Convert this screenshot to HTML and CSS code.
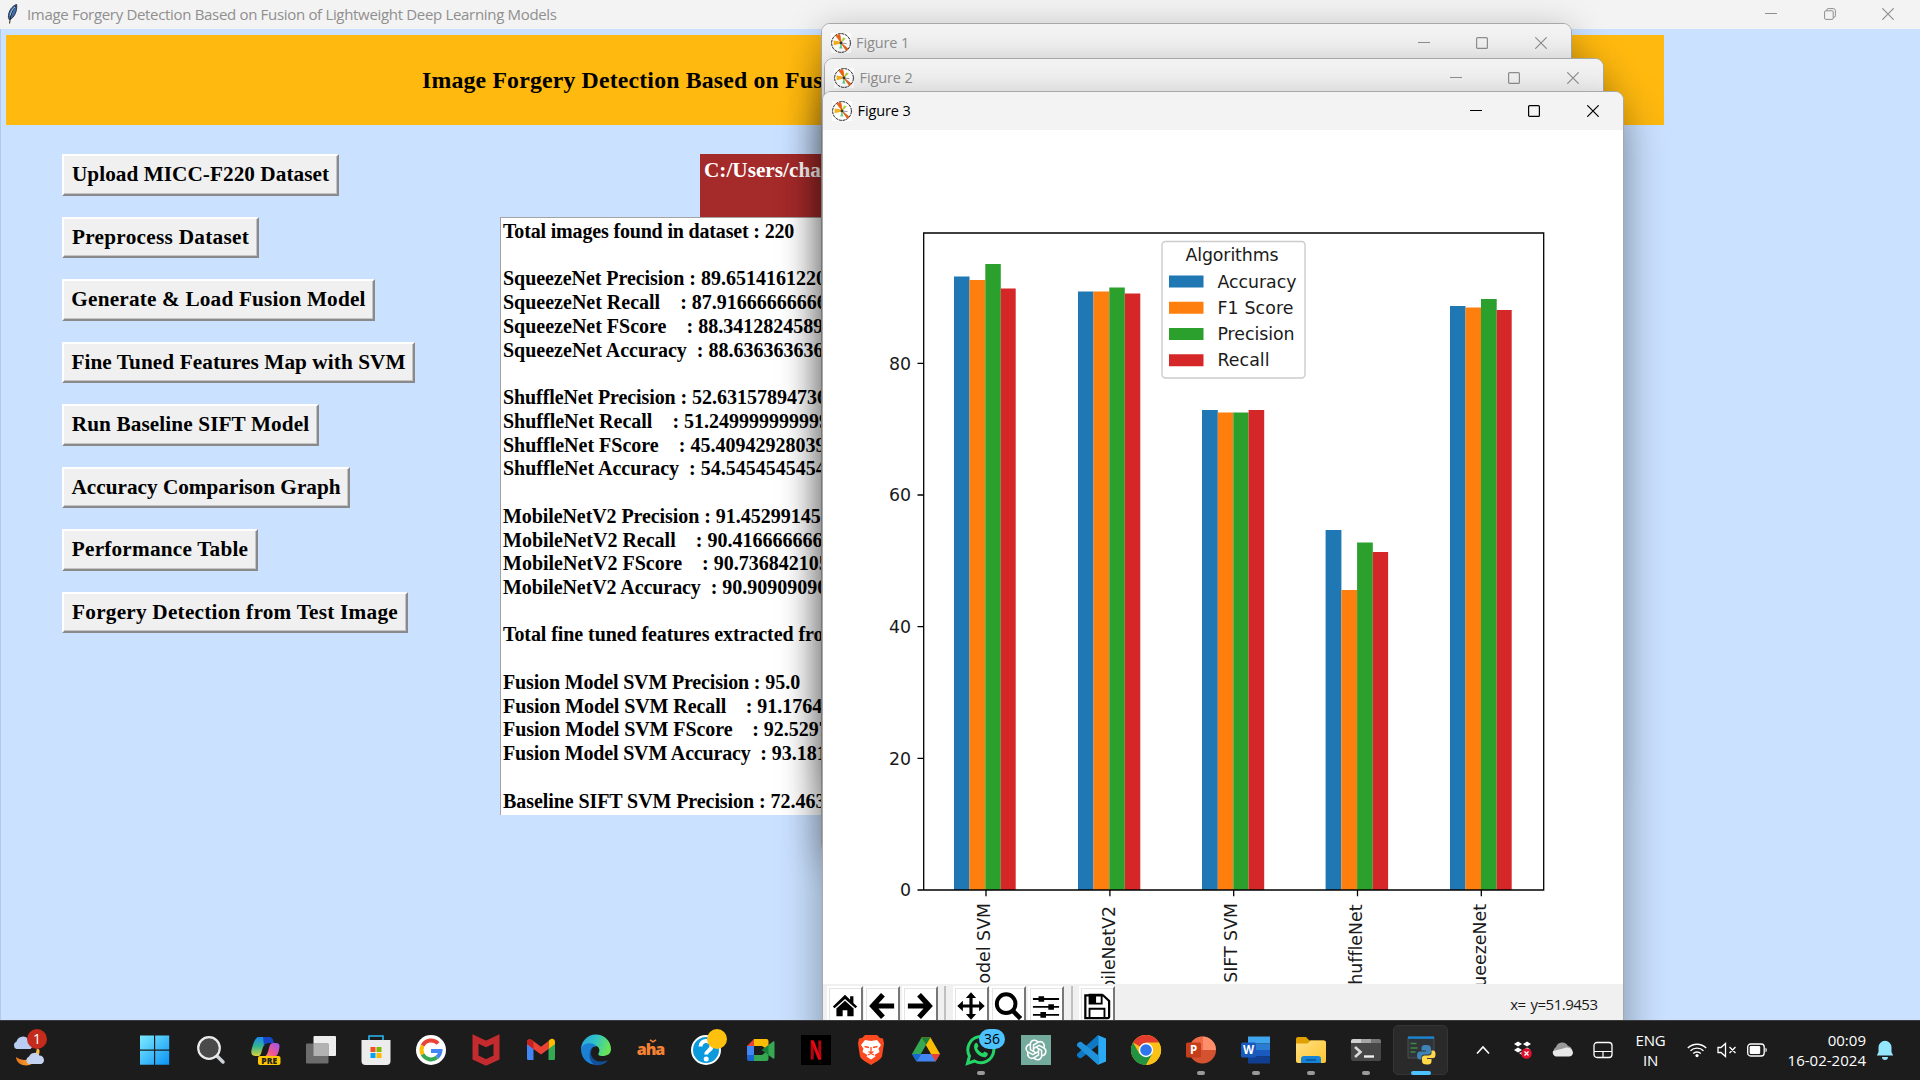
FILE: index.html
```html
<!DOCTYPE html>
<html lang="en">
<head>
<meta charset="utf-8">
<title>Image Forgery Detection</title>
<link rel="stylesheet" href="styles.css">
</head>
<body>
<svg class="defs" width="0" height="0">
  <defs>
    <linearGradient id="gWin" x1="0" y1="0" x2="1" y2="1"><stop offset="0" stop-color="#7deaff"/><stop offset="1" stop-color="#0a93f5"/></linearGradient>
    <linearGradient id="gCop1" x1="0" y1="0" x2="0" y2="1"><stop offset="0" stop-color="#1b8af0"/><stop offset=".5" stop-color="#35b58d"/><stop offset="1" stop-color="#d9d53a"/></linearGradient>
    <linearGradient id="gCop2" x1="1" y1="0" x2="0" y2="1"><stop offset="0" stop-color="#9a55f5"/><stop offset=".6" stop-color="#f0568f"/><stop offset="1" stop-color="#f79a5a"/></linearGradient>
    <linearGradient id="gEdge" x1="0" y1="0" x2="1" y2=".3"><stop offset="0" stop-color="#2b9fe0"/><stop offset=".5" stop-color="#2fc3c9"/><stop offset="1" stop-color="#67e35a"/></linearGradient>
    <linearGradient id="gFold" x1="0" y1="0" x2="1" y2="1"><stop offset="0" stop-color="#ffe083"/><stop offset="1" stop-color="#ffc52e"/></linearGradient>
    <linearGradient id="gMoon" x1="0" y1="0" x2="1" y2="0"><stop offset="0" stop-color="#e8731a"/><stop offset="1" stop-color="#ffc24a"/></linearGradient>
    <symbol id="mpl" viewBox="0 0 20 20">
      <rect width="20" height="20" fill="#fff"/>
      <circle cx="10" cy="10" r="9.4" fill="#fff" stroke="#222" stroke-width="1" stroke-dasharray="3 .7"/>
      <path d="M10.400 10 4.800 2.800 8.800 1.600z" fill="#ef6110" stroke="#ef6110" stroke-width=".8"/><path d="M10 10.400 2.600 12.200 2.600 7.600 9 8.600z" fill="#f2b21c"/>
      <path d="M10 10 12 4.400 14.800 5.600z" fill="#a6cf3a"/><path d="M10 10 8.200 15.600 11.400 15.600z" fill="#5cd37c"/>
      <path d="M10 10 15.400 17.400 17.200 16z" fill="#e2641d" stroke="#e2641d"/><path d="M10 10 15.500 10.600" stroke="#999"/><circle cx="10" cy="10" r="1.400" fill="#333"/>
    </symbol>
    <symbol id="min" viewBox="0 0 12 12"><path d="M0 5.500h12" stroke="currentColor"/></symbol>
    <symbol id="max" viewBox="0 0 12 12"><rect x=".6" y=".6" width="10.800" height="10.800" rx="1" fill="none" stroke="currentColor" stroke-width="1.200"/></symbol>
    <symbol id="close" viewBox="0 0 12 12"><path d="M.3.3l11.400 11.400M11.700.3.3 11.700" stroke="currentColor" stroke-width="1.200"/></symbol>
    <symbol id="restore" viewBox="0 0 12 12"><path d="M2.800 2.600V2a1.400 1.400 0 0 1 1.400-1.400h5a2.200 2.200 0 0 1 2.200 2.200v5a1.400 1.400 0 0 1-1.400 1.400h-.6" fill="none" stroke="currentColor"/><rect x=".6" y="2.800" width="8.600" height="8.600" rx="1.200" fill="none" stroke="currentColor"/></symbol>
  </defs>
</svg>

<div class="desktop">
  <main class="app">
    <header class="titlebar">
      <svg class="feather" viewBox="0 0 12 20"><path d="M10.600.4C6 2 2.200 7 2.400 13.600l1 2.200C8 14 11.600 7 10.600.4z" fill="#3f6fae" stroke="#1d2733" stroke-width=".9"/><path d="M9.800 2C6.500 6 4.500 10 3.600 19.500" fill="none" stroke="#222" stroke-width="1"/><path d="M9 3C6.600 5 5 8 4 11.500" stroke="#a8c8ea" fill="none" stroke-width="1"/></svg>
      <span class="title">Image Forgery Detection Based on Fusion of Lightweight Deep Learning Models</span>
      <div class="controls">
        <svg><use href="#min"/></svg><svg><use href="#restore"/></svg><svg><use href="#close"/></svg>
      </div>
    </header>
    <div class="client">
      <h1 class="banner">Image Forgery Detection Based on Fusion</h1>
      <div class="content">
        <nav class="actions">
          <button class="upload">Upload MICC-F220 Dataset</button>
          <button class="preprocess">Preprocess Dataset</button>
          <button class="generate">Generate &amp; Load Fusion Model</button>
          <button class="features">Fine Tuned Features Map with SVM</button>
          <button class="baseline">Run Baseline SIFT Model</button>
          <button class="graph">Accuracy Comparison Graph</button>
          <button class="table">Performance Table</button>
          <button class="detect">Forgery Detection from Test Image</button>
        </nav>
        <section class="results">
          <div class="path">C:/Users/cha</div>
          <pre class="log"><span class="total">Total images found in dataset : 220</span>

<span class="squeeze">SqueezeNet Precision : </span>89.6514161220
<span class="recall">SqueezeNet Recall    : </span>87.91666666666
<span class="recall">SqueezeNet FScore    : </span>88.3412824589
<span class="recall">SqueezeNet Accuracy  : </span>88.6363636363

<span class="shuffle">ShuffleNet Precision : </span>52.63157894736
<span class="recall">ShuffleNet Recall    : </span>51.249999999999
<span class="recall">ShuffleNet FScore    : </span>45.40942928039
<span class="recall">ShuffleNet Accuracy  : </span>54.5454545454

<span class="mobile">MobileNetV2 Precision : </span>91.4529914529
<span class="recall">MobileNetV2 Recall    : </span>90.4166666666
<span class="recall">MobileNetV2 FScore    : </span>90.7368421052
<span class="mobile">MobileNetV2 Accuracy  : </span>90.9090909090

<span class="mobile">Total fine tuned features extracted from</span>

<span class="fusion">Fusion Model SVM Precision : </span>95.0
<span class="mobile">Fusion Model SVM Recall    : </span>91.1764
<span class="mobile">Fusion Model SVM FScore    : </span>92.5297
<span class="fusion">Fusion Model SVM Accuracy  : </span>93.1818

<span class="mobile">Baseline SIFT SVM Precision : </span>72.4637</pre>
        </section>
      </div>
    </div>
  </main>

  <section class="window fig1">
    <header class="titlebar"><svg class="mpl"><use href="#mpl"/></svg><span class="title">Figure 1</span>
      <div class="controls"><svg><use href="#min"/></svg><svg><use href="#max"/></svg><svg><use href="#close"/></svg></div></header>
  </section>
  <section class="window fig2">
    <header class="titlebar"><svg class="mpl"><use href="#mpl"/></svg><span class="title">Figure 2</span>
      <div class="controls"><svg><use href="#min"/></svg><svg><use href="#max"/></svg><svg><use href="#close"/></svg></div></header>
  </section>
  <section class="window fig3">
    <header class="titlebar"><svg class="mpl"><use href="#mpl"/></svg><span class="title">Figure 3</span>
      <div class="controls"><svg><use href="#min"/></svg><svg><use href="#max"/></svg><svg><use href="#close"/></svg></div></header>
    <svg class="chart" viewBox="823 130 800 854" width="800" height="854">
      <g fill="#1f77b4"><path d="M954 276.500h15.500v613.500H954zM1078 291.500h15.500V890H1078zM1202 410h15.800V890H1202zM1325.600 530h15.800V890h-15.800zM1450 306h15.500v584H1450z"/></g>
      <g fill="#ff7f0e"><path d="M969.500 280h15.800V890h-15.800zM1093.500 291.500h15.800V890h-15.800zM1217.800 412.500h15.500V890h-15.500zM1341.400 590h15.700V890h-15.700zM1465.500 307.500h15.500V890h-15.500z"/></g>
      <g fill="#2ca02c"><path d="M985.300 264h15.500v626h-15.500zM1109.300 287.500h15.500V890h-15.500zM1233.300 412.500h15.300V890h-15.300zM1357.100 542.500h15.700V890h-15.700zM1481 299h15.700v591H1481z"/></g>
      <g fill="#d62728"><path d="M1000.800 288.500h14.900V890h-14.900zM1124.800 293.500h15.500V890h-15.500zM1248.600 410h15.600V890h-15.600zM1372.800 552h15.300v338h-15.300zM1496.700 310h15V890h-15z"/></g>
      <path d="M923.700 233h620v657h-620zM923.700 890h-6.200m6.200-131.700h-6.200m6.200-131.600h-6.200m6.200-131.700h-6.200m6.200-131.600h-6.200M986 890v6.200m123.900-6.200v6.200m123.800-6.200v6.200m123.800-6.200v6.200m123.800-6.200v6.200" fill="none" stroke="#000" stroke-width="1.300"/>
      <g class="ticks" text-anchor="end"><text x="911" y="896.200">0</text><text x="911" y="764.700">20</text><text x="911" y="632.800">40</text><text x="911" y="501.400">60</text><text x="911" y="369.700">80</text></g>
      <g class="ticks" text-anchor="end">
        <text transform="translate(989.500 903) rotate(-90)">Fusion Model SVM</text>
        <text transform="translate(1114.500 906) rotate(-90)">MobileNetV2</text>
        <text transform="translate(1237 903) rotate(-90)">Baseline SIFT SVM</text>
        <text transform="translate(1361.700 904.500) rotate(-90)">ShuffleNet</text>
        <text transform="translate(1485.700 904) rotate(-90)">SqueezeNet</text>
      </g>
      <rect x="1162" y="241.500" width="143" height="136.500" rx="3.500" fill="#fff" stroke="#ccc" stroke-width="1.400"/>
      <g class="ticks"><text x="1185.500" y="261.300" textLength="93">Algorithms</text><text x="1217.500" y="287.500" textLength="79">Accuracy</text><text x="1217.500" y="313.800" textLength="76">F1 Score</text><text x="1217.500" y="340" textLength="77">Precision</text><text x="1217.500" y="366.200" textLength="52">Recall</text></g>
      <path d="M1169 275.500h34.500v12H1169z" fill="#1f77b4"/><path d="M1169 301.800h34.500v12H1169z" fill="#ff7f0e"/><path d="M1169 328h34.500v12H1169z" fill="#2ca02c"/><path d="M1169 354.300h34.500v12H1169z" fill="#d62728"/>
    </svg>
    <footer class="toolbar">
      <div class="tools">
        <button><svg viewBox="0 0 30 30"><path d="M15 3 2 15.500l1.800 2L15 7.400l11.200 10.100 1.800-2-4-3.800V4.500h-3.500v3.800zM15 9.500 5.800 17.700V26h6.700v-6.500h5V26h6.700v-8.300z"/></svg></button>
        <button><svg viewBox="0 0 30 30"><path d="M16 3 5 15l11 12M6 15h22" fill="none" stroke="#000" stroke-width="5.600"/></svg></button>
        <button><svg viewBox="0 0 30 30"><path d="M14 3l11 12-11 12M24 15H2" fill="none" stroke="#000" stroke-width="5.600"/></svg></button>
        <i></i>
        <button><svg viewBox="0 0 30 30"><path d="M15 .3l5.500 6h-3.800v7h7V9.500l6 5.500-6 5.500v-3.800h-7v7h3.800l-5.500 6-5.500-6h3.800v-7h-7v3.800L.3 15l6-5.500v3.800h7v-7H9.500z"/></svg></button>
        <button><svg viewBox="0 0 30 30"><circle cx="13" cy="12.500" r="10" fill="none" stroke="#000" stroke-width="4.200"/><path d="M20 20l8.500 8.500" stroke="#000" stroke-width="5"/></svg></button>
        <button><svg viewBox="0 0 30 30"><path d="M1 7.500h28M1 16h28M1 24.500h28" stroke="#000" stroke-width="2"/><path d="M7 4.500h6v6H7zM17.500 13h6v6h-6zM9 21.500h6v6H9z"/></svg></button>
        <i></i>
        <button><svg viewBox="0 0 30 30"><path d="M2.500 3.500h19l6.500 6v17a1.500 1.500 0 0 1-1.500 1.500h-24z" fill="none" stroke="#000" stroke-width="2.400"/><path d="M7 3h13v9.500H7zM7 27v-9h16v9" fill="none" stroke="#000" stroke-width="2"/><path d="M7 3h7v9H7z"/></svg></button>
      </div>
      <output>x= y=51.9453</output>
    </footer>
  </section>

  <footer class="taskbar">
    <div class="weather">
      <svg viewBox="0 0 36 36" width="36" height="36"><path d="M25 17a13 13 0 0 1-21 9c0 5 5 8.500 10.500 8.500C22 34 28 27 27.500 19z" fill="url(#gMoon)"/><path d="M4.500 18a4 4 0 0 1 0-7.500 6.500 6.500 0 0 1 12-1.500 5 5 0 0 1 2 9z" fill="#b9cdf2"/><path d="M17 33a4 4 0 0 1 0-7.500 6 6 0 0 1 10.500-1 4.500 4.500 0 0 1 2 8.500z" fill="#c3d2f0"/></svg>
      <b class="badge red">1</b>
    </div>
    <div class="apps">
      <div><svg viewBox="0 0 30 30"><path d="M-1 .5h14v14H-1zm15.200 0h14v14h-14zM-1 15.700h14v14H-1zm15.200 0h14v14h-14z" fill="url(#gWin)"/></svg></div>
      <div><svg viewBox="0 0 30 30"><path d="M20 20l7 7" stroke="#cfd3d6" stroke-width="3.500" stroke-linecap="round"/><circle cx="13" cy="13" r="10.800" fill="#4a4a4a" stroke="#e8eaec" stroke-width="2.200"/></svg></div>
      <div><svg viewBox="0 0 30 30"><path d="M8 2h9c3 0 4 2 5 6h-5c-4 0-5 4-6.500 9S8 21 5 21C0 21-.5 18 1 13S4 2 8 2z" fill="url(#gCop1)"/><path d="M12 2h6c3 0 4 2 5 6h-6c-2 0-3 1-4 3z" fill="#1747c9"/><path d="M23 8h2c4 0 4 3 3 7s-2 7-6 7h-9c3-1 4-5 5-9s2-5 5-5z" fill="url(#gCop2)"/><rect x="7" y="21" width="22.500" height="9" rx="2" fill="#ffc800"/><text x="18.200" y="28.500" text-anchor="middle" class="pre">PRE</text></svg></div>
      <div><svg viewBox="0 0 30 30"><rect x="7.500" y="1" width="22.500" height="20" rx="1" fill="#ededed"/><rect y="8.500" width="22.500" height="20" rx="1" fill="#6c6c6c"/><path d="M7.500 8.500h15V21h-15z" fill="#b2b2b2"/></svg></div>
      <div><svg viewBox="0 0 30 30"><path d="M8 6V1h14v5" fill="none" stroke="#28b6f0" stroke-width="1.600"/><path d="M.5 5h29v21a4 4 0 0 1-4 4h-21a4 4 0 0 1-4-4z" fill="#ececec"/><path d="M9.500 12h5v5h-5z" fill="#f25022"/><path d="M15.500 12h5v5h-5z" fill="#7fba00"/><path d="M9.500 18h5v5h-5z" fill="#00a4ef"/><path d="M15.500 18h5v5h-5z" fill="#ffb900"/></svg></div>
      <div><svg viewBox="0 0 30 30"><circle cx="15" cy="15" r="15" fill="#fff"/><g fill="none" stroke-width="4"><path d="M22 8.500A9.500 9.500 0 0 0 6.600 10.600" stroke="#ea4335"/><path d="M6.600 10.600a9.500 9.500 0 0 0 0 8.800" stroke="#fbbc05"/><path d="M6.600 19.400A9.500 9.500 0 0 0 21 22.300" stroke="#34a853"/><path d="M21 22.300a9.500 9.500 0 0 0 3.400-6.300H15" stroke="#4285f4"/></g></svg></div>
      <div><svg viewBox="0 0 30 30"><path d="M4.500 4 15 9l10.500-5v18.500L15 27.500 4.500 22.500z" fill="none" stroke="#c42b2e" stroke-width="6"/></svg></div>
      <div><svg viewBox="0 0 30 30"><path d="M1 8v15.500c0 1 .7 1.500 1.500 1.500H7.500V12z" fill="#4285f4"/><path d="M29 8v15.500c0 1-.7 1.500-1.500 1.500h-5V12z" fill="#34a853"/><path d="M22.500 6v8L29 9V7c0-3-3-4-5-2.500z" fill="#fbbc04"/><path d="M1 7.500C1 4 4 3.500 6 5l9 6.700 7.500-5.700v8L15 19.500 7.500 14 1 9z" fill="#ea4335"/><path d="M1 7.500C1 4 4 3.500 6 5l1.500 1v8L1 9z" fill="#c5221f"/></svg></div>
      <div><svg viewBox="0 0 30 30"><path d="M0 15A15 15 0 0 1 30 14c0 5-4 7-8.500 7-4 0-4.500-1.500-4-2.500 2-3 1-8-5-8C5 10.500 0 14 0 15z" fill="url(#gEdge)"/><path d="M0 15c.5-7 11.500-9 15.500-3.500-4-.5-6 2.500-6 6 0 6 6 12 10 11.600A15 15 0 0 1 0 15z" fill="#1b7fd4"/><path d="M11.500 13c-4 6 0 13.500 8 13.500 4 0 6.500-1.500 7.500-1-5 5.500-11 5-13 4.500C8 27 6.500 17 11.500 13z" fill="#124f99"/></svg></div>
      <div class="aha">aha<svg viewBox="0 0 8 4"><path d="M1 .8l3 2 3-2" fill="none" stroke="#f58233" stroke-width="1.500"/></svg></div>
      <div><svg viewBox="0 0 30 30"><circle cx="15" cy="15" r="14" fill="#0b9add" stroke="#fff" stroke-width="2"/><path d="M9.500 11.500c0-7.500 11.500-7 11 0-.3 4-5.300 4-5.300 8" fill="none" stroke="#fff" stroke-width="4"/><circle cx="15.200" cy="24" r="2.500" fill="#fff"/></svg><b class="badge dot"></b></div>
      <div><svg viewBox="0 0 30 30"><path d="M1 11l7-7v7z" fill="#ea4335"/><path d="M1 11h7v9H1z" fill="#4285f4"/><path d="M1 20h7v6H3a2 2 0 0 1-2-2z" fill="#1967d2"/><path d="M8 4h12.500a2 2 0 0 1 2 2v9L16 11H8z" fill="#fbbc04"/><path d="M8 20h8l6.500-5v9a2 2 0 0 1-2 2H8z" fill="#34a853"/><path d="M16 15l11-8.500c.8-.5 1.500 0 1.500 1v15c0 1-.8 1.500-1.500 1z" fill="#34a853"/><path d="M16 15l6.500-5v10z" fill="#188038"/></svg></div>
      <div><svg viewBox="0 0 30 30"><path d="M0 0h30v30H0z" fill="#000"/><path d="M11.200 5.500v19M18.800 5.500v19" stroke="#b1060f" stroke-width="3"/><path d="M9.700 5.500h3.200l7.400 19h-3.200z" fill="#e50914"/></svg></div>
      <div><svg viewBox="0 0 30 30"><path d="M9 0h12l3 3 3 .5 1 5-2 13c-1 3-7 6-11 8.500C11 27.500 5 24.500 4 21.500L2 8.500l1-5L6 3z" fill="#fb4a20"/><path d="M9 5l6 1 6-1 4 5-2.500 3.500 1 3.500-5 3 1 1.500L15 24.500 10.500 21.500l1-1.500-5-3 1-3.500L5 10z" fill="#fff"/><path d="M8.500 11.500l4.500 1M21.500 11.500l-4.500 1M15 12v5M12.500 16.500 15 18l2.500-1.500M12 20l3-1.500 3 1.500" stroke="#fb4a20" stroke-width="1.300" fill="none"/></svg></div>
      <div><svg viewBox="0 0 30 30"><path d="M10.500 2.500 1 19l4.500 7.500L15 10z" fill="#34a853"/><path d="M19.500 2.500 29 19h-9L10.500 2.500z" fill="#fbbc04"/><path d="M10.500 2.500h9L15 10z" fill="#188038"/><path d="M10 19h19l-4.500 7.500h-19z" fill="#4285f4"/><path d="M1 19h9l-4.500 7.500z" fill="#1967d2"/><path d="M20 19h9l-4.500 7.500z" fill="#ea4335"/><path d="M15 11.500 19.500 19h-9z" fill="#1c1c1c"/></svg></div>
      <div class="open"><svg viewBox="0 0 30 30"><path d="M1.500 28.500l2-7.500a13 13 0 1 1 5 5z" fill="none" stroke="#25d366" stroke-width="3"/><path d="M9 8.500c1-1 2-.8 2.500.3l1 2.400-1.300 2c1.300 2.600 3 4 5.500 5l1.800-1.800 3 1.500c.8.700 0 3-1.500 4C14 24 5 14 9 8.500z" fill="#25d366"/></svg><b class="badge blue">36</b></div>
      <div><svg viewBox="0 0 30 30"><path d="M0 0h30v30H0z" fill="#74aa9c"/><g fill="none" stroke="#fff" stroke-width="1.500"><path d="M12.500 17V10l5-3c4-1.500 7 2.500 5.300 6"/><path d="M12.500 17V10l5-3c4-1.500 7 2.500 5.300 6" transform="rotate(60 15 15)"/><path d="M12.500 17V10l5-3c4-1.500 7 2.500 5.300 6" transform="rotate(120 15 15)"/><path d="M12.500 17V10l5-3c4-1.500 7 2.500 5.300 6" transform="rotate(180 15 15)"/><path d="M12.500 17V10l5-3c4-1.500 7 2.500 5.300 6" transform="rotate(240 15 15)"/><path d="M12.500 17V10l5-3c4-1.500 7 2.500 5.300 6" transform="rotate(300 15 15)"/></g></svg></div>
      <div><svg viewBox="0 0 30 30"><path d="M22 0 1 19v2l2 2 2 .2L22 10z" fill="#0f78c4"/><path d="M22 30 1 11V9l2-2 2-.2L22 20z" fill="#1f92dc"/><path d="M21.500 0 30 3.500v23L21.500 30c.6-.3.700-1 .7-2V2c0-1-.1-1.700-.7-2z" fill="#2aaaf5"/></svg></div>
      <div><svg viewBox="0 0 30 30"><circle cx="15" cy="15" r="15" fill="#fbc116"/><path d="M15 15 2 7.500A15 15 0 0 1 28 7.500z" fill="#e33b2e"/><path d="M2 7.500A15 15 0 0 0 15 30l6.500-11.200H8.500z" fill="#229342"/><path d="M15 7.500h13A15 15 0 0 1 15 30l6.500-11.200z" fill="#fbc116"/><circle cx="15" cy="15" r="7.200" fill="#fff"/><circle cx="15" cy="15" r="5.800" fill="#2f76ee"/></svg></div>
      <div class="open"><svg viewBox="0 0 30 30"><circle cx="16.500" cy="15" r="13.500" fill="#d35230"/><path d="M16.500 1.500A13.500 13.500 0 0 1 30 15H16.500z" fill="#ff8f6b"/><path d="M16.500 1.500A13.500 13.500 0 0 0 3 15h13.500z" fill="#ed6c47"/><rect y="7.500" width="15" height="15" rx="1.500" fill="#c43e1c"/><text x="7.500" y="19" class="office">P</text></svg></div>
      <div class="open"><svg viewBox="0 0 30 30"><path d="M7 1.500h22v7H7z" fill="#41a5ee"/><path d="M7 8.500h22V15H7z" fill="#2b7cd3"/><path d="M7 15h22v6.500H7z" fill="#185abd"/><path d="M7 21.500h22v7H7z" fill="#103f91"/><rect y="7.500" width="15" height="15" rx="1.500" fill="#185abd"/><text x="7.500" y="19" class="office">W</text></svg></div>
      <div class="open"><svg viewBox="0 0 30 30"><path d="M0 4a2 2 0 0 1 2-2h8l3.500 3.500H28V10H0z" fill="#e0a100"/><path d="M0 8.500h11.500l3-3H28a2 2 0 0 1 2 2V26a2 2 0 0 1-2 2H2a2 2 0 0 1-2-2z" fill="url(#gFold)"/><path d="M5 28v-4a3 3 0 0 1 3-3h14a3 3 0 0 1 3 3v4z" fill="#1583d8"/><path d="M10 25h10" stroke="#0b4f94" stroke-width="1.400"/></svg></div>
      <div class="open"><svg viewBox="0 0 30 30"><path d="M0 6h30v18a2 2 0 0 1-2 2H2a2 2 0 0 1-2-2z" fill="#474747"/><path d="M0 8V6a2 2 0 0 1 2-2h8v4z" fill="#d0d0d0"/><path d="M10 4h10v4H10z" fill="#a5a5a5"/><path d="M20 4h8a2 2 0 0 1 2 2v2H20z" fill="#777"/><path d="M4 12l5.500 5L4 22" fill="none" stroke="#d8d8d8" stroke-width="2.600"/><path d="M13 21.500h10" stroke="#eee" stroke-width="2.400"/></svg></div>
      <div class="open active"><svg viewBox="0 0 30 30"><path d="M2 2h26v21H2z" fill="#303438" stroke="#555" stroke-width=".8"/><path d="M2 1.500h26v2.300H2z" fill="#1687d9"/><path d="M4.500 8.500h6M4.500 13h7M4.500 17h5" stroke="#3d8b40" stroke-width="1.300"/><path d="M20 10c-4 0-4.500 1.500-4.500 4v1.500H20v1h-6c-2 0-3 1.500-3 4s1 4 3 4h1.500V22c0-1.500 1-2.500 3-2.500h4c1.500 0 2.500-1 2.500-2.500v-3.500C25 11 23.500 10 20 10z" fill="#3e83b8"/><path d="M21 29.500c4 0 4.500-1.500 4.500-3.500v-2H21v-1h6c2 0 2.500-1.500 2.500-4s-1-3.500-2.500-3.500h-1.500V18c0 1.500-1 2.500-3 2.500h-4c-1.500 0-2.500 1-2.500 2.500v3c0 2.500 1.500 3.500 5 3.500z" fill="#ffd94a"/></svg></div>
    </div>
    <div class="tray">
      <svg class="chev" width="16" height="16" viewBox="0 0 16 16"><path d="M2 11.500 8 5l6 6.500" fill="none" stroke="#fff" stroke-width="1.600"/></svg>
      <svg class="drop" width="20" height="20" viewBox="0 0 20 20"><path d="M5 1.500 9 4 5 6.500 1 4zM14 1.500 18 4l-4 2.500L10 4zM5 7.500 9 10l-4 2.500L1 10zM14 7.500l3.500 2H11zM6 13l3 2v-3z" fill="#fff"/><circle cx="13.500" cy="13.500" r="5.300" fill="#e0102e"/><path d="M11.500 11.500l4 4m0-4-4 4" stroke="#fff" stroke-width="1.300"/></svg>
      <svg class="cloud" width="22" height="16" viewBox="0 0 22 16"><path d="M4 13A4.500 4.500 0 0 1 4 5a6.500 6.500 0 0 1 12-1 5 5 0 0 1 2 9z" fill="#9a9a9a"/><path d="M5 14.500c-2.500 0-5-2-4-5.500l10-2.500 3-1a6 6 0 0 1 7 5c0 2.500-2 4-4 4z" fill="#e8e8e8"/></svg>
      <svg class="pad" width="20" height="18" viewBox="0 0 20 18"><rect x="1" y="1.500" width="18" height="15" rx="3" fill="none" stroke="#fff" stroke-width="1.300"/><path d="M1 10.500h18M10 10.500v6" stroke="#fff" stroke-width="1.200"/></svg>
      <div class="lang">ENG<br>IN</div>
      <svg class="wifi" width="20" height="16" viewBox="0 0 20 16"><path d="M.8 6a13 13 0 0 1 18.400 0M3.500 8.800a9.200 9.200 0 0 1 13 0M6.200 11.500a5.400 5.400 0 0 1 7.600 0" fill="none" stroke="#fff" stroke-width="1.400"/><circle cx="10" cy="13.600" r="1.600" fill="#fff"/></svg>
      <svg class="snd" width="20" height="16" viewBox="0 0 20 16"><path d="M1 5.500h3l4.500-4v13l-4.500-4H1zM12.500 5l6 6m0-6-6 6" fill="none" stroke="#fff" stroke-width="1.300"/></svg>
      <svg class="bat" width="21" height="14" viewBox="0 0 21 14"><rect x=".7" y="1" width="16.500" height="12" rx="3" fill="none" stroke="#fff" stroke-width="1.300"/><rect x="2.700" y="3" width="10.500" height="8" rx="1.200" fill="#fff"/><path d="M18.500 4.800c1.700.2 1.700 4.200 0 4.400z" fill="#fff"/></svg>
      <div class="clock">00:09<br>16-02-2024</div>
      <svg class="bell" width="18" height="20" viewBox="0 0 18 20"><path d="M9 .8a6.500 6.500 0 0 1 6.500 6.500v4.700l1.700 3.500H.8L2.500 12V7.300A6.500 6.500 0 0 1 9 .8zM6 17h6a3 3 0 0 1-6 0z" fill="#93e6fb"/></svg>
    </div>
  </footer>
</div>
</body>
</html>
```
FILE: styles.css
```css
* { box-sizing: border-box; }
body { margin: 0; width: 1920px; height: 1080px; overflow: hidden; font-family: "Open Sans", "Noto Sans", sans-serif; }
button { font: inherit; padding: 0; margin: 0; }
.defs { position: absolute; }
.desktop { position: relative; width: 1920px; height: 1080px; overflow: hidden; background: #cae1ff; }

/* window chrome */
.titlebar { display: flex; align-items: center; background: #f3f3f3; color: #8f8f8f; font-size: 14.5px; padding-bottom: 1.5px; }
.titlebar .title { letter-spacing: -0.1px; white-space: nowrap; }
.controls { display: flex; margin-left: auto; gap: 46.5px; }
.controls svg { width: 12px; height: 12px; }

/* main application */
.app { height: 1020px; display: flex; flex-direction: column; }
.app > .titlebar { height: 29px; padding: 0 26px 1.5px 6px; }
.app > .titlebar .title { margin-left: 9px; font-size: 15px; letter-spacing: -0.32px; }
.feather { width: 12px; height: 20px; }
.client { flex: 1; border-left: 1px solid #b4c9e4; padding: 6px 256px 0 5px; }
.banner { margin: 0; height: 90px; padding-left: 416px; background: #ffb90f; color: #000; font: bold 23.75px/90px "Liberation Serif", serif; letter-spacing: 0.19px; white-space: nowrap; overflow: hidden; }
.content { display: flex; margin-top: 29px; padding-left: 56px; }
.actions { display: flex; flex-direction: column; align-items: flex-start; gap: 21px; width: 438px; }
.actions button { height: 41.5px; border: 2px solid; border-color: #fff #8a8a8a #8a8a8a #fff; background: #f0f0f0; box-shadow: inset -1px -1px #c4c4c4; color: #000; font: bold 21.25px/1 "Liberation Serif", serif; white-space: nowrap; }
.upload { width: 277px; letter-spacing: 0.04px; }
.preprocess { width: 197px; letter-spacing: 0.27px; }
.generate { width: 313px; letter-spacing: 0.18px; }
.features { width: 353px; letter-spacing: 0.07px; }
.baseline { width: 257px; letter-spacing: 0.1px; }
.graph { width: 288px; }
.table { width: 196px; letter-spacing: 0.2px; }
.detect { width: 346px; letter-spacing: 0.23px; }
.results { width: 900px; font-family: "Liberation Serif", serif; font-weight: bold; font-variant-ligatures: none; }
.path { margin-left: 200px; height: 62.5px; padding: 4px 4px; background: #a52a2a; color: #fff; font-size: 21.25px; line-height: 25px; }
.log { margin: 0; height: 598px; padding: 2.5px 0 0 2px; border: solid #a3a3a3; border-width: 1px 0 0 1px; background: #fff; color: #000; font: inherit; font-size: 20px; line-height: 23.73px; overflow: hidden; }
.total { letter-spacing: -0.17px; }
.squeeze { letter-spacing: -0.05px; }
.recall { letter-spacing: 0; }
.shuffle { letter-spacing: -0.1px; }
.mobile { letter-spacing: -0.08px; }
.fusion { letter-spacing: -0.16px; }

/* figure windows */
.window { position: absolute; display: flex; flex-direction: column; border: 1px solid #a8a8a8; border-radius: 9px 9px 0 0; background: #f3f3f3; overflow: hidden; box-shadow: 0 8px 36px rgba(0,0,0,.28); }
.window > .titlebar { flex: none; height: 38px; padding: 0 24px 1px 9px; }
.window .mpl { width: 20px; height: 20px; margin-right: 5.5px; }
.fig1 { left: 820.5px; top: 23px; width: 751px; height: 830px; border-radius: 9px; }
.fig2 { left: 824px; top: 58px; width: 779.5px; height: 722px; }
.fig3 { left: 822px; top: 91px; width: 801.5px; height: 1000px; box-shadow: 0 16px 44px rgba(0,0,0,.38); }
.fig3 .titlebar { color: #000; }
.chart { display: block; background: #fff; flex: none; }
.ticks { font-family: "DejaVu Sans", sans-serif; font-size: 17.36px; fill: #1a1a1a; font-variant-ligatures: none; }
.toolbar { display: flex; justify-content: space-between; height: 60px; background: #f0f0f0; padding: 2px 25px 0 3.5px; }
.toolbar output { font-size: 15px; line-height: 36px; letter-spacing: -0.5px; word-spacing: 1.5px; color: #1a1a1a; }
.tools { display: flex; gap: 1.6px; }
.tools button { width: 36px; height: 40px; border: 2px solid; border-color: #fff #777 #777 #fff; background: #fff; display: flex; justify-content: center; padding-top: 2.5px; box-shadow: inset 1px 1px #e4e4e4; }
.tools button svg { width: 28px; height: 30px; flex: none; }
.tools i { width: 2px; height: 40px; margin: 0 5px; background: #c0c0c0; }

/* taskbar */
.taskbar { position: absolute; left: 0; top: 1020px; width: 1920px; height: 60px; display: flex; background: #1c1c1c; border-top: 1px solid #3c3c3c; color: #fff; }
.weather { position: relative; width: 128px; padding: 10px 0 0 12px; }
.apps { display: flex; }
.apps > div { position: relative; width: 55px; height: 59px; display: flex; align-items: center; justify-content: center; padding-bottom: 1px; }
.apps svg { width: 30px; height: 30px; overflow: visible; }
.badge { position: absolute; border-radius: 10px; height: 20px; font-size: 14px; font-weight: 400; line-height: 20px; text-align: center; }
.red { left: 27px; top: 8px; width: 20px; background: #c42b1c; }
.dot { left: 28.5px; top: 8px; width: 20px; background: #ffc00e; }
.blue { left: 26px; top: 8px; width: 26px; background: #4cc2ff; color: #000; }
.open::after { content: ""; position: absolute; left: 50%; bottom: 5px; width: 8px; height: 4px; margin-left: -4px; border-radius: 2px; background: #9a9a9a; }
.apps .active::before { content: ""; position: absolute; inset: 4px 0 5px 0; border: 1px solid #353535; border-radius: 5px; background: #2a2a2a; }
.active svg { position: relative; }
.open.active::after { width: 20px; margin-left: -10px; background: #4cc2ff; }
.pre { font: 800 8.5px "Open Sans", sans-serif; fill: #222; }
.office { font: bold 11.5px "Open Sans", sans-serif; fill: #fff; text-anchor: middle; }
.apps .aha { color: #f58233; font: 800 16px "Open Sans", sans-serif; letter-spacing: -1px; padding-bottom: 4px; }
.apps .aha svg { position: absolute; left: 26px; top: 18px; width: 8px; height: 4px; }
.tray { display: flex; align-items: center; margin-left: 27px; padding-bottom: 1px; }
.tray svg { flex: none; }
.tray .drop { margin-left: 21.5px; }
.cloud { margin-left: 19.5px; }
.pad { margin-left: 18.5px; }
.lang, .clock { font-size: 15px; line-height: 20px; letter-spacing: 0.02px; }
.lang { width: 36px; margin-left: 20px; text-align: center; letter-spacing: -0.2px; }
.wifi { margin-left: 18.5px; }
.snd { margin-left: 10px; }
.bat { margin-left: 10px; }
.clock { width: 96px; margin-left: 2px; text-align: right; }
.bell { margin-left: 9.5px; }
```
